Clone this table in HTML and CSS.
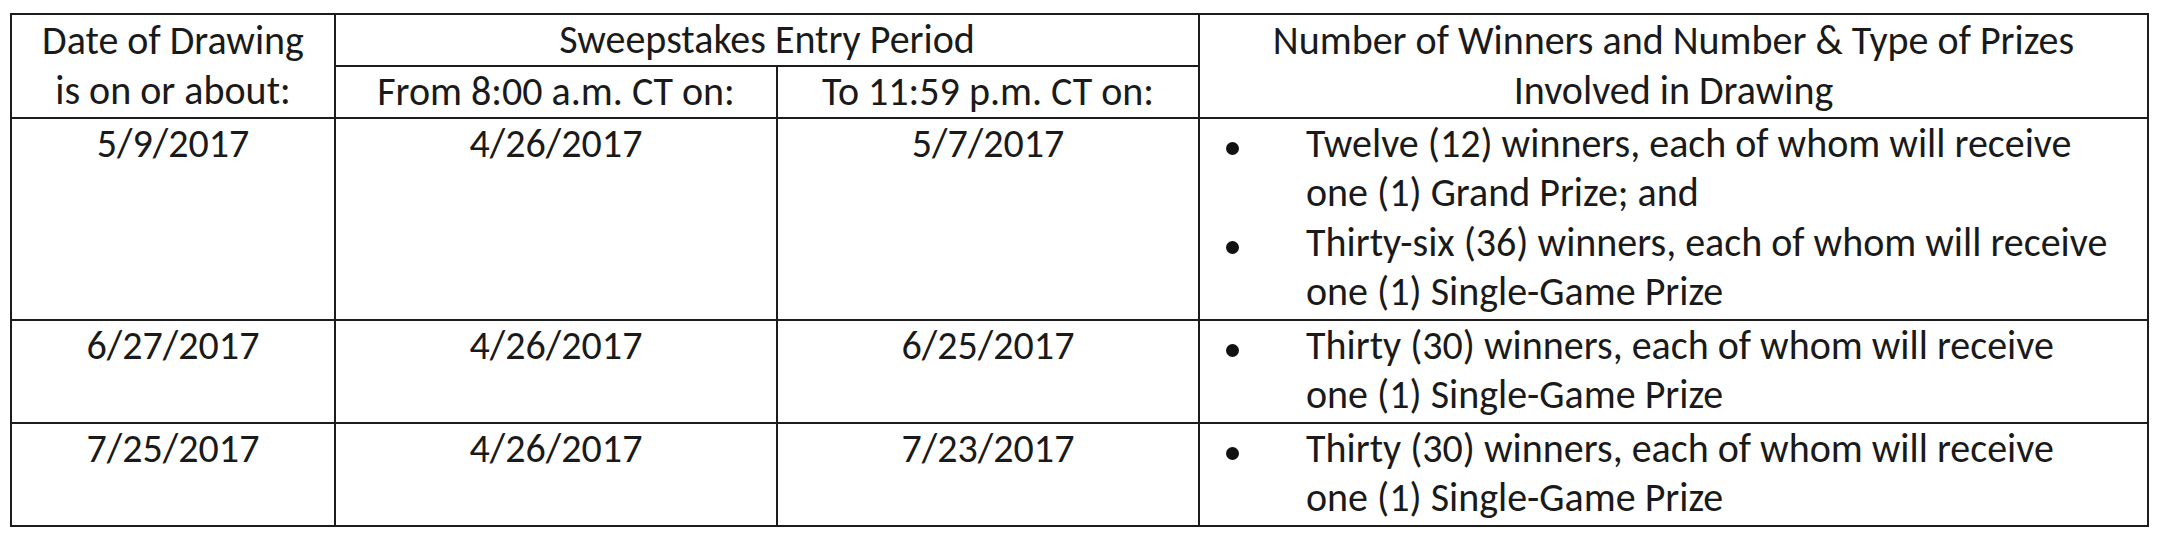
FILE: index.html
```html
<!DOCTYPE html>
<html lang="en">
<head>
<meta charset="utf-8">
<title>Sweepstakes Drawing Schedule</title>
<link rel="stylesheet" href="styles.css">
</head>
<body>
<div class="page">
<table class="schedule">
  <colgroup>
    <col class="col-date">
    <col class="col-from">
    <col class="col-to">
    <col class="col-prizes">
  </colgroup>
  <thead>
    <tr class="head-top">
      <th rowspan="2">Date of Drawing<br>is on or about:</th>
      <th colspan="2">Sweepstakes Entry Period</th>
      <th rowspan="2">Number of Winners and Number &amp; Type of Prizes<br>Involved in Drawing</th>
    </tr>
    <tr class="head-sub">
      <th>From 8:00 a.m. CT on:</th>
      <th>To 11:59 p.m. CT on:</th>
    </tr>
  </thead>
  <tbody>
    <tr>
      <td>5/9/2017</td>
      <td>4/26/2017</td>
      <td>5/7/2017</td>
      <td class="prizes">
        <ul class="prize-list">
          <li><span class="mark"><span class="dot"></span></span><span class="txt">Twelve (12) winners, each of whom will receive<br>one (1) Grand Prize; and</span></li>
          <li><span class="mark"><span class="dot"></span></span><span class="txt">Thirty-six (36) winners, each of whom will receive<br>one (1) Single-Game Prize</span></li>
        </ul>
      </td>
    </tr>
    <tr>
      <td>6/27/2017</td>
      <td>4/26/2017</td>
      <td>6/25/2017</td>
      <td class="prizes">
        <ul class="prize-list">
          <li><span class="mark"><span class="dot"></span></span><span class="txt">Thirty (30) winners, each of whom will receive<br>one (1) Single-Game Prize</span></li>
        </ul>
      </td>
    </tr>
    <tr>
      <td>7/25/2017</td>
      <td>4/26/2017</td>
      <td>7/23/2017</td>
      <td class="prizes">
        <ul class="prize-list">
          <li><span class="mark"><span class="dot"></span></span><span class="txt">Thirty (30) winners, each of whom will receive<br>one (1) Single-Game Prize</span></li>
        </ul>
      </td>
    </tr>
  </tbody>
</table>
</div>
</body>
</html>
```
FILE: styles.css
```css
html, body {
  margin: 0;
  padding: 0;
  background: #ffffff;
}
.page {
  padding: 13px 0 0 10px;
}
.schedule {
  border-collapse: collapse;
  table-layout: fixed;
  width: 2137px;
  font-family: Carlito, Calibri, "Open Sans", sans-serif;
  font-size: 40px;
  line-height: 49.5px;
  color: #1a1a1a;
}
.col-date { width: 324px; }
.col-from { width: 442px; }
.col-to { width: 422px; }
.col-prizes { width: 949px; }
.schedule th,
.schedule td {
  border: 2px solid #1c1c1c;
  padding: 0;
  font-weight: normal;
  text-align: center;
  vertical-align: top;
}
.schedule th {
  vertical-align: middle;
}
.head-top th { height: 49px; }
.head-sub th { height: 50px; }
.schedule td {
  padding: 0 0 2px;
}
.schedule td.prizes {
  text-align: left;
}
.prize-list {
  list-style: none;
  margin: 0;
  padding: 0;
}
.prize-list li {
  display: flex;
  align-items: flex-start;
}
.mark {
  flex: 0 0 106px;
  display: flex;
  padding-left: 26px;
  box-sizing: border-box;
}
.dot {
  width: 13px;
  height: 13px;
  border-radius: 50%;
  background: #111;
  margin-top: 23px;
}
.txt {
  flex: 1 1 auto;
  white-space: nowrap;
}
```
